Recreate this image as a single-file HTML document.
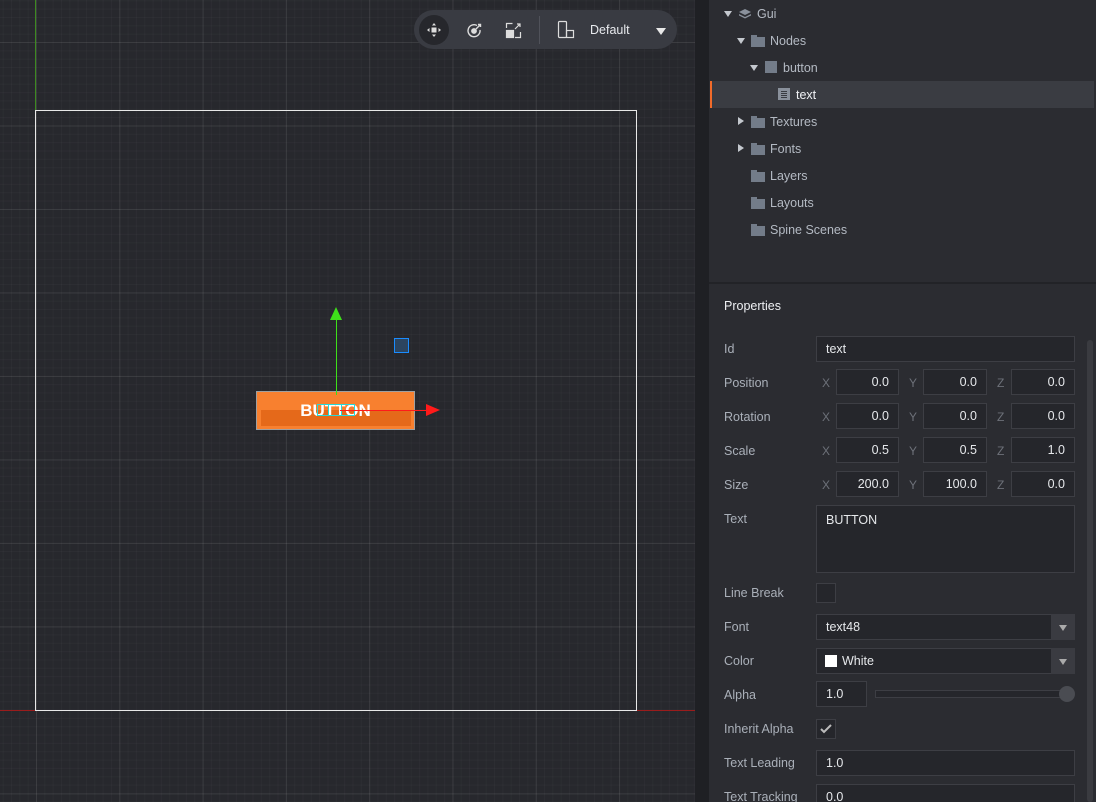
<!DOCTYPE html>
<html><head><style>
*{margin:0;padding:0;box-sizing:border-box}
html,body{width:1096px;height:802px;overflow:hidden}
body{background:#27282d;font-family:"Liberation Sans",sans-serif;position:relative}
.abs{position:absolute}
#canvas{left:0;top:0;width:695px;height:802px;background-color:#27282d;
background-image:
linear-gradient(90deg,rgba(255,255,255,0.07) 1px,transparent 1px),
linear-gradient(0deg,rgba(255,255,255,0.07) 1px,transparent 1px),
linear-gradient(90deg,rgba(255,255,255,0.025) 1px,transparent 1px),
linear-gradient(0deg,rgba(255,255,255,0.025) 1px,transparent 1px);
background-size:83.3px 83.5px,83.3px 83.5px,8.33px 8.35px,8.33px 8.35px;
background-position:36px 43px,0 43px,36px 43px,0 43px;}
#div{left:695px;top:0;width:14px;height:802px;background:#1f2024}
#panel{left:709px;top:0;width:387px;height:802px;background:#2b2c31}
.tree{position:absolute;font-size:12.5px;color:#b4bac3}
.fold{position:absolute;width:14px;height:10px;background:#737c89}
.fold:before{content:"";position:absolute;left:0;top:-2px;width:6px;height:3px;background:#737c89}
.lab{position:absolute;left:724px;font-size:12.5px;color:#aab0b9}
.inp{position:absolute;height:26px;background:#25262b;border:1px solid #3d3e44;color:#e6e8eb;font-size:12.5px;line-height:25px;padding:0 9px}
.num{text-align:right}
.ax{position:absolute;font-size:12px;color:#6d7179}
.tri{position:absolute;width:0;height:0;border-left:4px solid transparent;border-right:4px solid transparent;border-top:6px solid #c4c8ce}
.trir{position:absolute;width:0;height:0;border-top:4px solid transparent;border-bottom:4px solid transparent;border-left:6px solid #c4c8ce}
</style></head><body>
<div id="canvas" class="abs"></div>
<div class="abs" style="left:35px;top:0;width:1px;height:110px;background:#3d8a20"></div>
<div class="abs" style="left:0;top:710px;width:695px;height:1px;background:#9a1c1c"></div>
<div class="abs" style="left:35px;top:110px;width:602px;height:601px;border:1px solid #e8e8e8"></div>
<div class="abs" style="left:256px;top:391px;width:159px;height:39px;background:#f8802f;border:1px solid #a0a0a0"></div>
<div class="abs" style="left:261px;top:410px;width:150px;height:16px;background:#e5691a"></div>
<div class="abs" style="left:256px;top:401px;width:159px;text-align:center;color:#fff;font-weight:bold;font-size:17px">BUTTON</div>
<div class="abs" style="left:317px;top:404px;width:38px;height:12px;border:1px solid #27d8d8"></div>
<div class="abs" style="left:328px;top:404px;width:14px;height:12px;border:1px solid #27d8d8"></div>
<div class="abs" style="left:336px;top:318px;width:1px;height:77px;background:#3ee01a"></div>
<div class="abs" style="left:330px;top:307px;width:0;height:0;border-left:6px solid transparent;border-right:6px solid transparent;border-bottom:13px solid #3ee01a"></div>
<div class="abs" style="left:340px;top:410px;width:88px;height:1px;background:#ff1a1a"></div>
<div class="abs" style="left:426px;top:404px;width:0;height:0;border-top:6px solid transparent;border-bottom:6px solid transparent;border-left:14px solid #ff1a1a"></div>
<div class="abs" style="left:394px;top:338px;width:15px;height:15px;border:1px solid #1a8cff;background:#2c4560"></div>
<div class="abs" style="left:414px;top:10px;width:263px;height:39px;border-radius:20px;background:#393b42"></div>
<div class="abs" style="left:419px;top:15px;width:30px;height:30px;border-radius:15px;background:#26272c"></div>
<svg class="abs" style="left:426px;top:22px" width="16" height="16" viewBox="0 0 16 16" fill="#ddd"><rect x="5.5" y="5.5" width="5" height="5"/><path d="M8 1l2 2.5H6zM8 15l2-2.5H6zM1 8l2.5 2V6zM15 8l-2.5 2V6z"/></svg>
<svg class="abs" style="left:466px;top:22px" width="17" height="17" viewBox="0 0 17 17" fill="none" stroke="#ddd" stroke-width="1.4"><path d="M11 3.5A6 6 0 1 0 14 8"/><circle cx="8" cy="9" r="2.2" fill="#ddd"/><path d="M10 7l4-4M12 2.5h2.5V5"/></svg>
<svg class="abs" style="left:505px;top:22px" width="17" height="17" viewBox="0 0 17 17" fill="none" stroke="#ddd" stroke-width="1.2"><rect x="1.5" y="8.5" width="7" height="7" fill="#ddd"/><path d="M1.5 6V1.5h6M10 15.5h5.5V10M10 7l5-5M12 2h3v3"/></svg>
<div class="abs" style="left:539px;top:16px;width:1px;height:28px;background:#50525a"></div>
<svg class="abs" style="left:557px;top:20px" width="18" height="19" viewBox="0 0 18 19" fill="none" stroke="#ddd" stroke-width="1.2"><rect x="1.5" y="1.5" width="8" height="16" rx="1"/><rect x="9.5" y="10.5" width="7" height="7"/></svg>
<div class="abs" style="left:590px;top:23px;font-size:12.5px;color:#e8eaee">Default</div>
<div class="tri" style="left:656px;top:28px;border-top-color:#e8e8e8;border-left-width:5px;border-right-width:5px;border-top-width:7px"></div>
<div id="div" class="abs"></div>
<div id="panel" class="abs"></div>
<div class="abs" style="left:710px;top:81px;width:384px;height:27px;background:#3a3c42"></div>
<div class="abs" style="left:710px;top:81px;width:2px;height:27px;background:#f26b2a"></div>
<div class="tri" style="left:724px;top:11px"></div>
<svg class="abs" style="left:738px;top:8px" width="14" height="11" viewBox="0 0 14 11" fill="#8a919c"><path d="M7 1l6 3-6 3-6-3z"/><path d="M1 6l6 3 6-3v1.5l-6 3-6-3z"/></svg>
<div class="tree" style="left:757px;top:7px">Gui</div>
<div class="tri" style="left:737px;top:38px"></div>
<div class="fold" style="left:751px;top:37px"></div>
<div class="tree" style="left:770px;top:34px">Nodes</div>
<div class="tri" style="left:750px;top:65px"></div>
<div class="abs" style="left:765px;top:61px;width:12px;height:12px;background:#737c89"></div>
<div class="tree" style="left:783px;top:61px">button</div>
<div class="abs" style="left:778px;top:88px;width:12px;height:12px;background:#8a919c"></div>
<div class="abs" style="left:781px;top:91px;width:6px;height:1px;background:#3a3c42;box-shadow:0 2px #3a3c42,0 4px #3a3c42,0 6px #3a3c42"></div>
<div class="tree" style="left:796px;top:88px;color:#f0f2f5">text</div>
<div class="trir" style="left:738px;top:117px"></div>
<div class="fold" style="left:751px;top:118px"></div>
<div class="tree" style="left:770px;top:115px">Textures</div>
<div class="trir" style="left:738px;top:144px"></div>
<div class="fold" style="left:751px;top:145px"></div>
<div class="tree" style="left:770px;top:142px">Fonts</div>
<div class="fold" style="left:751px;top:172px"></div>
<div class="tree" style="left:770px;top:169px">Layers</div>
<div class="fold" style="left:751px;top:199px"></div>
<div class="tree" style="left:770px;top:196px">Layouts</div>
<div class="fold" style="left:751px;top:226px"></div>
<div class="tree" style="left:770px;top:223px">Spine Scenes</div>
<div class="abs" style="left:709px;top:282px;width:387px;height:2px;background:#222327"></div>
<div class="abs" style="left:724px;top:299px;font-size:12.5px;color:#eef0f3">Properties</div>
<div class="abs" style="left:1087px;top:340px;width:6px;height:462px;background:#3a3b40;border-radius:3px"></div>
<div class="lab" style="top:342px">Id</div>
<div class="inp" style="left:816px;top:336px;width:259px">text</div>
<div class="lab" style="top:376px">Position</div>
<div class="lab" style="top:410px">Rotation</div>
<div class="lab" style="top:444px">Scale</div>
<div class="lab" style="top:478px">Size</div>
<div id="vec"></div>
<script>
var vals=[["0.0","0.0","0.0"],["0.0","0.0","0.0"],["0.5","0.5","1.0"],["200.0","100.0","0.0"]];
var h="";for(var r=0;r<4;r++){var t=369+r*34;
h+='<div class="ax" style="left:822px;top:'+(t+7)+'px">X</div><div class="inp num" style="left:836px;top:'+t+'px;width:63px">'+vals[r][0]+'</div>';
h+='<div class="ax" style="left:909px;top:'+(t+7)+'px">Y</div><div class="inp num" style="left:923px;top:'+t+'px;width:64px">'+vals[r][1]+'</div>';
h+='<div class="ax" style="left:997px;top:'+(t+7)+'px">Z</div><div class="inp num" style="left:1011px;top:'+t+'px;width:64px">'+vals[r][2]+'</div>';}
document.getElementById("vec").innerHTML=h;
</script>
<div class="lab" style="top:512px">Text</div>
<div class="inp" style="left:816px;top:505px;width:259px;height:68px;line-height:28px">BUTTON</div>
<div class="lab" style="top:586px">Line Break</div>
<div class="inp" style="left:816px;top:583px;width:20px;height:20px"></div>
<div class="lab" style="top:620px">Font</div>
<div class="inp" style="left:816px;top:614px;width:259px">text48</div>
<div class="abs" style="left:1051px;top:614px;width:24px;height:26px;background:#3a3b41"></div>
<div class="tri" style="left:1059px;top:625px;border-top-color:#aaa"></div>
<div class="lab" style="top:654px">Color</div>
<div class="inp" style="left:816px;top:648px;width:259px;padding-left:25px">White</div>
<div class="abs" style="left:825px;top:655px;width:12px;height:12px;background:#fff"></div>
<div class="abs" style="left:1051px;top:648px;width:24px;height:26px;background:#3a3b41"></div>
<div class="tri" style="left:1059px;top:659px;border-top-color:#aaa"></div>
<div class="lab" style="top:688px">Alpha</div>
<div class="inp" style="left:816px;top:681px;width:51px">1.0</div>
<div class="abs" style="left:875px;top:690px;width:192px;height:8px;background:#25262b;border:1px solid #3d3e44"></div>
<div class="abs" style="left:1059px;top:686px;width:16px;height:16px;border-radius:8px;background:#4a4c52"></div>
<div class="lab" style="top:722px">Inherit Alpha</div>
<div class="inp" style="left:816px;top:719px;width:20px;height:20px"></div>
<svg class="abs" style="left:819px;top:722px" width="14" height="14" viewBox="0 0 14 14" fill="none" stroke="#bbb" stroke-width="2"><path d="M2 7l3 3 7-7"/></svg>
<div class="lab" style="top:756px">Text Leading</div>
<div class="inp" style="left:816px;top:750px;width:259px">1.0</div>
<div class="lab" style="top:790px">Text Tracking</div>
<div class="inp" style="left:816px;top:784px;width:259px">0.0</div>
</body></html>
